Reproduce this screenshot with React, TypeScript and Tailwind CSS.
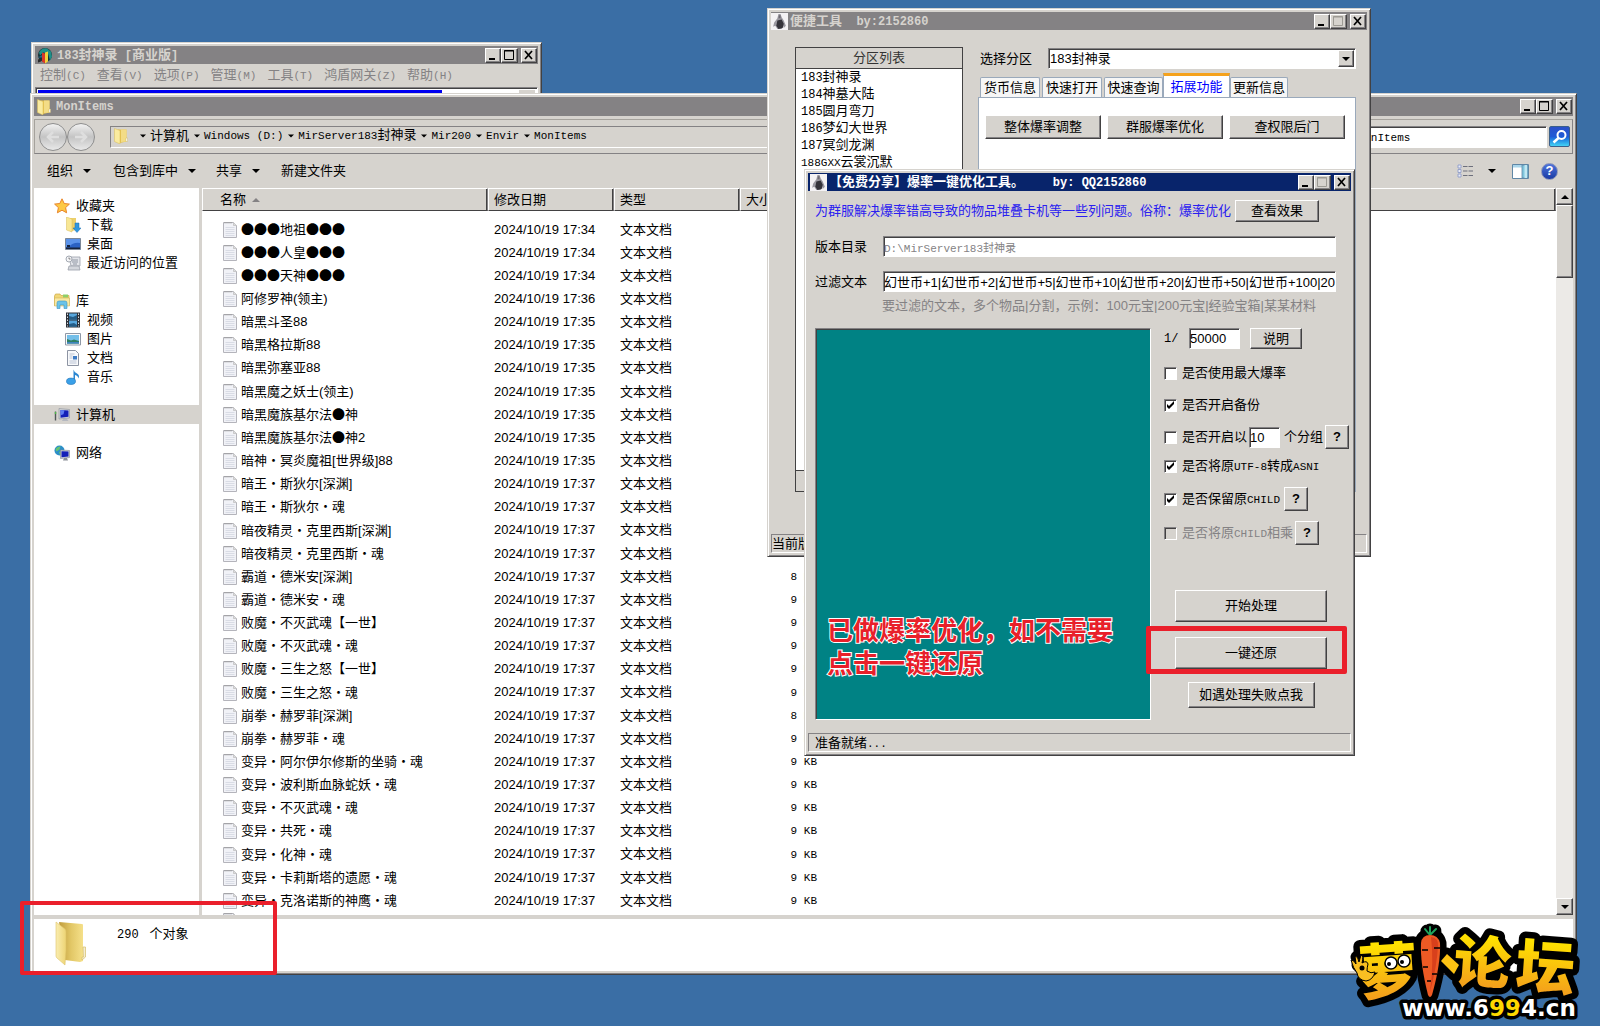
import React from "react";

const RAISED =
  "bg-[#d6d3ce] border border-t-white border-l-white border-r-[#424142] border-b-[#424142] shadow-[inset_-1px_-1px_0_#848284]";
const SUNKEN =
  "border border-t-[#848284] border-l-[#848284] border-r-white border-b-white shadow-[inset_1px_1px_0_#424142]";
const WINDOW =
  "bg-[#d6d3ce] border border-t-[#d6d3ce] border-l-[#d6d3ce] border-r-[#424142] border-b-[#424142] shadow-[inset_1px_1px_0_#fff,inset_-1px_-1px_0_#848284] p-[3px]";

function Mono({ children }: { children: React.ReactNode }) {
  return <span className="font-['Liberation_Mono',monospace] text-[11px] whitespace-pre">{children}</span>;
}

function Caption({ children }: { children: React.ReactNode }) {
  return <span className="font-['Liberation_Mono',monospace] text-[12px] whitespace-pre">{children}</span>;
}

function Down({ className = "w-2" }: { className?: string }) {
  return (
    <svg viewBox="0 0 8 4" className={`h-1 shrink-0 ${className}`} aria-hidden="true">
      <path d="M0 0h8L4 4z" fill="#000" />
    </svg>
  );
}

function WindowButtons({ dimMax = false }: { dimMax?: boolean }) {
  const max = dimMax ? "#9c9a94" : "#000";
  return (
    <div className="ml-auto flex shrink-0 items-center pr-px">
      <button aria-label="最小化" className={`${RAISED} h-[15px] w-4`}>
        <svg viewBox="0 0 14 13" className="h-[13px] w-3.5">
          <path d="M3 9h6v2H3z" />
        </svg>
      </button>
      <button aria-label="最大化" className={`${RAISED} h-[15px] w-[17px]`}>
        <svg viewBox="0 0 15 13" className="h-[13px] w-[15px]">
          <path d="M2.5 1.5h9v9h-9zM2 2h10" fill="none" stroke={max} />
        </svg>
      </button>
      <button aria-label="关闭" className={`${RAISED} ml-[3px] h-[15px] w-4`}>
        <svg viewBox="0 0 14 13" className="h-[13px] w-3.5">
          <path d="M3 2l7 8M10 2l-7 8" fill="none" stroke="#000" strokeWidth="1.7" />
        </svg>
      </button>
    </div>
  );
}

function FolderIcon({ className = "h-4 w-4" }: { className?: string }) {
  return (
    <svg viewBox="0 0 16 16" className={`shrink-0 ${className}`} aria-hidden="true">
      <path d="M5 1.5h8.500v12L7 15z" fill="#e6c452" />
      <path d="M8 1.5h5.500v12L8 14z" fill="#f3dc86" />
      <path d="M1.500.5L7 2.500V16l-5.500-2.500z" fill="#faeb9f" stroke="#d9bb55" strokeWidth=".5" />
      <path d="M13 10h1.500v3.500H13z" fill="#fff" stroke="#c8ad50" strokeWidth=".4" />
    </svg>
  );
}

function BigFolder() {
  return (
    <svg viewBox="0 0 32 45" className="h-[45px] w-8 shrink-0" aria-hidden="true">
      <defs>
        <linearGradient id="bf1" x1="0" x2="1">
          <stop offset="0" stopColor="#c09c3c" />
          <stop offset=".5" stopColor="#e2c766" />
          <stop offset="1" stopColor="#f5e08a" />
        </linearGradient>
        <linearGradient id="bf2" x1="0" x2="1">
          <stop offset="0" stopColor="#faedb0" />
          <stop offset="1" stopColor="#edd474" />
        </linearGradient>
      </defs>
      <path d="M4 1l23 2q1 0 1 1v36l-3 1-15-2z" fill="url(#bf1)" />
      <path d="M28 26h2.500v10L27 39v-3h1.500z" fill="#f4edd0" stroke="#d6bd68" strokeWidth=".7" />
      <path d="M1 1l9 7q1 1 1 3v18l-1 15-8-7q-1-1-1-2z" fill="url(#bf2)" stroke="#ddc36a" strokeWidth=".6" />
    </svg>
  );
}

function FileIcon() {
  return (
    <svg viewBox="0 0 14 17" className="h-[17px] w-3.5 shrink-0" aria-hidden="true">
      <path d="M.5 1.500H10.500l3 3v12H.5z" fill="#f1f2f7" stroke="#b4b4bb" />
      <path d="M10.500 1.500v3h3" fill="#ddd" stroke="#bbb" strokeWidth=".7" />
      <path d="M2 1v1.500M4 1v1.500M6 1v1.500M8 1v1.500" stroke="#888" strokeWidth=".7" />
      <path d="M2.500 6.500h9M2.500 8.500h9M2.500 10.500h9M2.500 12.500h9M2.500 14.500h9" stroke="#d3d6e0" strokeWidth=".8" />
    </svg>
  );
}

function AppIcon() {
  return (
    <svg viewBox="0 0 16 16" className="h-[17px] w-[17px] shrink-0" aria-hidden="true">
      <path d="M0 0h16v16H0z" fill="#f4f2f4" />
      <path d="M7 1l2 0 1 3 2 3 2 5-2 2-1-4-1 5H6l-2-3-2 1 1-4 3-4z" fill="#9a98a0" />
      <path d="M6 7l4-1 2 4-1 4-4 1-2-3z" fill="#35333a" />
      <path d="M7.500 2h1.500v3H7z" fill="#6e6a72" />
    </svg>
  );
}

function GlobeDoorIcon() {
  return (
    <svg viewBox="0 0 16 16" className="h-[17px] w-4 shrink-0" aria-hidden="true">
      <circle cx="8" cy="7.500" r="7" fill="#16323a" />
      <path d="M2 5q3-5 8-4l4 3 1 5-2 4-2-7-5-1-3 3z" fill="#1f8f88" />
      <path d="M1 10l5-3v3z" fill="#1c6f8c" />
      <path d="M5 5l3 1v10l-3-2z" fill="#d9382a" />
      <path d="M8 5l3-1v10l-3 2z" fill="#f0d23c" />
      <path d="M1 12l3-1v3l-3 1z" fill="#2b2b2b" />
    </svg>
  );
}

type IconName =
  | "star" | "download" | "desktop" | "recent" | "library" | "video" | "picture" | "document" | "music" | "computer" | "network";

function NavIcon({ name }: { name: IconName }) {
  const art: Record<IconName, React.ReactNode> = {
    star: (
      <path d="M8 .8l2.200 4.700 5.200.6-3.800 3.500 1 5.200L8 12.200l-4.600 2.600 1-5.200L.6 6.100l5.200-.6z" fill="#fdc944" stroke="#e8842a" />
    ),
    download: (
      <>
        <path d="M5 1h6v12l-4 1z" fill="#ecd06a" />
        <path d="M1.500 0L7 2v13l-5.500-2z" fill="#f8e795" stroke="#d9bb55" strokeWidth=".5" />
        <path d="M10 6h4v5h2l-4 4.500L8 11h2z" fill="#2f97e0" stroke="#1a6cb0" strokeWidth=".5" />
      </>
    ),
    desktop: (
      <>
        <path d="M.5 2.500h15v11H.5z" fill="#2b62c4" stroke="#7b8798" />
        <path d="M1 3h14v4Q8 6 4 11H1z" fill="#5b93ea" />
        <path d="M1 11.500h14V13H1z" fill="#16233c" />
        <path d="M2 9h3v2H2z" fill="#16233c" />
      </>
    ),
    recent: (
      <>
        <path d="M4 2h11v9H6z" fill="#e3e5ea" stroke="#9aa0aa" strokeWidth=".8" />
        <path d="M7 5h6M7 7h6M8 9h4" stroke="#8f96a3" />
        <path d="M4 11h10l1 4H3z" fill="#d4d7dd" stroke="#9aa0aa" strokeWidth=".8" />
        <circle cx="4" cy="4" r="3" fill="#f5f6f8" stroke="#a5aab3" />
        <path d="M4 2.500V4h1.500" stroke="#666" fill="none" strokeWidth=".8" />
      </>
    ),
    library: (
      <>
        <path d="M.5 3l1-2H6l1 1.500h8v10H.5z" fill="#f1d778" stroke="#cda945" strokeWidth=".7" />
        <path d="M9 1.500h5v3H9z" fill="#8fcf6a" />
        <path d="M.5 5h15v8H.5z" fill="#f9e9a4" stroke="#cda945" strokeWidth=".5" />
        <path d="M3 15.500V10q0-2 2-2h6q2 0 2 2v5.500h-3V12H6v3.500z" fill="#6cc3e8" stroke="#3d94c4" strokeWidth=".6" />
      </>
    ),
    video: (
      <>
        <path d="M1 .5h14v15H1z" fill="#2d3138" />
        <path d="M4 1.500h8v6H4zM4 8.500h8v6H4z" fill="#57a6dc" />
        <path d="M4 4l4 1 4-2v4.500H4zM4 12l5-1 3 2v1.500H4z" fill="#245c86" />
        <path d="M2.500 1.500v13M13.500 1.500v13" stroke="#d8dce2" strokeDasharray="1.500 1.500" />
      </>
    ),
    picture: (
      <>
        <path d="M.5 2.500h15v11.500H.5z" fill="#fafafa" stroke="#8f98a6" />
        <path d="M2 4h12v8.500H2z" fill="#74bfe9" />
        <path d="M2 8l4 1.500 3-1 5 1.500v2.500H2z" fill="#2f7f63" />
        <path d="M2 11h12v1.500H2z" fill="#3f83c0" />
      </>
    ),
    document: (
      <>
        <path d="M2.500.5h8l3 3v12h-11z" fill="#f8f9fb" stroke="#8d94a3" />
        <path d="M4.500 4h5M4.500 6h3M4.500 8h3M4.500 11h7M4.500 13h7" stroke="#a9b6cc" strokeWidth=".8" />
        <path d="M8 6h4v3.500H8z" fill="#3f7cc4" />
      </>
    ),
    music: (
      <>
        <path d="M8.500.5Q9 3 12 4.500t1.500 5Q13 6.500 10 6v6.500H8.500z" fill="#2a86d2" />
        <ellipse cx="6" cy="12.300" rx="4.500" ry="3.200" fill="#3aa0e8" stroke="#1f71b5" strokeWidth=".6" />
      </>
    ),
    computer: (
      <>
        <path d="M5 1.500l10.500 1V11L5 12z" fill="#cfd3da" stroke="#8b9099" strokeWidth=".6" />
        <path d="M6.500 3l8 .6v6.200l-8 .9z" fill="#1420b8" />
        <path d="M6.500 3l4 .3-1 4-3 1z" fill="#5d7df0" />
        <path d="M9 12h4l1.500 2H8z" fill="#b5b8c0" />
        <path d="M.8 4.500h1.400v9H.8z" fill="#50585a" />
        <path d="M.8 5h1.400v2H.8z" fill="#4db848" />
      </>
    ),
    network: (
      <>
        <circle cx="5.500" cy="5.500" r="5" fill="#2c8fc9" />
        <path d="M1.500 4q2-3 5-2.500l-1 3-3 2zM5 7l3-1v4H6z" fill="#66c470" />
        <path d="M6.500 5l9 .5v7l-9 1z" fill="#cdd1d8" stroke="#7f8590" strokeWidth=".6" />
        <path d="M7.500 6.200l7 .4v5l-7 .7z" fill="#1420b8" />
        <path d="M10 13h3l1 2.500H9z" fill="#8b8f98" />
      </>
    ),
  };
  return (
    <svg viewBox="0 0 16 16" className="h-4 w-4 shrink-0" aria-hidden="true">
      {art[name]}
    </svg>
  );
}

const NAV: { head: [IconName, string]; items: [IconName, string][]; active?: boolean }[] = [
  { head: ["star", "收藏夹"], items: [["download", "下载"], ["desktop", "桌面"], ["recent", "最近访问的位置"]] },
  { head: ["library", "库"], items: [["video", "视频"], ["picture", "图片"], ["document", "文档"], ["music", "音乐"]] },
  { head: ["computer", "计算机"], items: [], active: true },
  { head: ["network", "网络"], items: [] },
];

const FILES: [string, string, number][] = [
  ["●●●地祖●●●", "17:34", 9],
  ["●●●人皇●●●", "17:34", 9],
  ["●●●天神●●●", "17:34", 9],
  ["阿修罗神(领主)", "17:36", 9],
  ["暗黑斗圣88", "17:35", 9],
  ["暗黑格拉斯88", "17:35", 9],
  ["暗黑弥塞亚88", "17:35", 9],
  ["暗黑魔之妖士(领主)", "17:35", 9],
  ["暗黑魔族基尔法●神", "17:35", 9],
  ["暗黑魔族基尔法●神2", "17:35", 9],
  ["暗神·冥炎魔祖[世界级]88", "17:35", 9],
  ["暗王·斯狄尔[深渊]", "17:37", 8],
  ["暗王·斯狄尔·魂", "17:37", 9],
  ["暗夜精灵·克里西斯[深渊]", "17:37", 8],
  ["暗夜精灵·克里西斯·魂", "17:37", 9],
  ["霸道·德米安[深渊]", "17:37", 8],
  ["霸道·德米安·魂", "17:37", 9],
  ["败魔·不灭武魂【一世】", "17:37", 9],
  ["败魔·不灭武魂·魂", "17:37", 9],
  ["败魔·三生之怒【一世】", "17:37", 9],
  ["败魔·三生之怒·魂", "17:37", 9],
  ["崩拳·赫罗菲[深渊]", "17:37", 8],
  ["崩拳·赫罗菲·魂", "17:37", 9],
  ["变异·阿尔伊尔修斯的坐骑·魂", "17:37", 9],
  ["变异·波利斯血脉蛇妖·魂", "17:37", 9],
  ["变异·不灭武魂·魂", "17:37", 9],
  ["变异·共死·魂", "17:37", 9],
  ["变异·化神·魂", "17:37", 9],
  ["变异·卡莉斯塔的遗愿·魂", "17:37", 9],
  ["变异·克洛诺斯的神鹰·魂", "17:37", 9],
];

function FileName({ name }: { name: string }) {
  return (
    <span>
      {name.split(/([·●])/).map((part, i) =>
        part === "·" || part === "●" ? (
          <span key={i} className="inline-block w-[13px] text-center font-['Noto_Sans_CJK_SC',sans-serif]">
            {part}
          </span>
        ) : (
          part
        ),
      )}
    </span>
  );
}

function ControlWindow() {
  const menus = [["控制", "C"], ["查看", "V"], ["选项", "P"], ["管理", "M"], ["工具", "T"], ["鸿盾网关", "Z"], ["帮助", "H"]];
  return (
    <section className={`absolute top-[42px] left-[31px] w-[511px] ${WINDOW}`}>
      <header className="flex h-[18px] items-center gap-1 bg-[#848284] pl-0.5 font-bold text-[#d6d3ce]">
        <GlobeDoorIcon />
        <h2>
          <Caption>183</Caption>封神录<Caption> [</Caption>商业版<Caption>]</Caption>
        </h2>
        <WindowButtons />
      </header>
      <nav className="flex h-[23px] items-center gap-[11px] pl-[5px] text-[#848284]">
        {menus.map(([label, key]) => (
          <button key={key}>
            {label}
            <Mono>({key})</Mono>
          </button>
        ))}
      </nav>
      <div className={`flex h-10 bg-white p-0.5 ${SUNKEN}`}>
        <div className="w-[404px] bg-[#0000f0]" />
        <div className="ml-auto w-4 bg-[#d6d3ce]" />
      </div>
    </section>
  );
}

function NavButton({ dir }: { dir: "left" | "right" }) {
  return (
    <button
      aria-label={dir === "left" ? "后退" : "前进"}
      className="flex size-7 items-center justify-center rounded-full border border-[#8e8e8e] bg-linear-to-b from-[#f2f2f2] via-[#c4c4c4] to-[#e9e9e9]"
    >
      <svg viewBox="0 0 16 16" className="size-4" aria-hidden="true">
        <path
          d={dir === "left" ? "M14 8H3M8 3L3 8l5 5" : "M2 8h11M8 3l5 5-5 5"}
          fill="none"
          stroke="#dedede"
          strokeWidth="2.500"
        />
      </svg>
    </button>
  );
}

function Explorer() {
  const crumbs: React.ReactNode[] = [
    "计算机",
    <Mono>Windows (D:)</Mono>,
    <><Mono>MirServer183</Mono>封神录</>,
    <Mono>Mir200</Mono>,
    <Mono>Envir</Mono>,
    <Mono>MonItems</Mono>,
  ];
  const th = "border border-t-white border-l-white border-r-[#848284] border-b-[#424142] p-0 text-left font-normal shadow-[inset_-1px_0_0_#424142]";
  return (
    <section className={`absolute top-[93px] right-[23px] bottom-[51px] left-[30px] flex flex-col ${WINDOW}`}>
      <header className="flex h-[19px] shrink-0 items-center gap-1 bg-[#848284] pl-0.5 font-bold text-[#d6d3ce]">
        <FolderIcon />
        <h2>
          <Caption>MonItems</Caption>
        </h2>
        <WindowButtons />
      </header>
      <div className="mt-[3px] flex h-[35px] shrink-0 items-center border border-t-[#a5a29c] border-r-[#848284] border-b-[#848284] border-l-[#a5a29c] pr-0.5 pl-1">
        <NavButton dir="left" />
        <NavButton dir="right" />
        <div className="ml-[15px] flex h-[22px] flex-1 items-center border border-t-[#848284] border-r-white border-b-white border-l-[#848284] pb-0.5 pl-0.5">
          <FolderIcon />
          <ol className="ml-1.5 flex">
            {crumbs.map((crumb, i) => (
              <li key={i} className="flex items-center">
                <span className="flex w-[15px] justify-center">
                  <Down className="w-1.5" />
                </span>
                <a href="#">{crumb}</a>
              </li>
            ))}
          </ol>
        </div>
        <input
          aria-label="搜索"
          defaultValue="搜索 MonItems"
          className={`ml-2 h-[22px] w-[234px] bg-white pb-0.5 pl-[15px] font-['Liberation_Mono','Noto_Sans_CJK_SC',monospace] text-[11px] ${SUNKEN}`}
        />
        <button aria-label="搜索" className="ml-0.5 flex size-[21px] items-center justify-center rounded-xs border border-[#3b5f8a] bg-linear-to-b from-[#2b50c8] via-[#1f5ad6] to-[#45d2f4]">
          <svg viewBox="0 0 16 16" className="size-4" aria-hidden="true">
            <circle cx="9.500" cy="6" r="4" fill="none" stroke="#fff" strokeWidth="2" />
            <path d="M6.500 9L1.500 13.500" stroke="#fff" strokeWidth="2.500" />
          </svg>
        </button>
      </div>
      <div className="flex h-[34px] shrink-0 items-center pr-[15px] pl-[13px]">
        <button className="flex items-center gap-2.5">组织<Down /></button>
        <button className="ml-[22px] flex items-center gap-2.5">包含到库中<Down /></button>
        <button className="ml-5 flex items-center gap-2.5">共享<Down /></button>
        <button className="ml-[21px]">新建文件夹</button>
        <button aria-label="更改视图" className="ml-auto flex items-center gap-3.5">
          <svg viewBox="0 0 17 14" className="h-3.5 w-[17px]" aria-hidden="true">
            <path d="M1 1h3v3H1zM1 5.500h3v3H1zM1 10h3v3H1z" fill="#e9ecf8" stroke="#8f9cc8" strokeWidth=".9" />
            <path d="M6 2.500h11M6 7h11M6 11.500h11" stroke="#6d6f7c" strokeDasharray="4.500 1" />
          </svg>
          <Down />
        </button>
        <button aria-label="预览窗格" className="ml-4">
          <svg viewBox="0 0 17 15" className="h-[15px] w-[17px]" aria-hidden="true">
            <path d="M.5.5h16v14H.5z" fill="#fff" stroke="#5f87a6" />
            <path d="M1 1h9v2.500H1z" fill="#a9d5ea" />
            <path d="M10 1h6v13h-6z" fill="#7fc6dd" stroke="#5f87a6" strokeWidth=".8" />
            <path d="M12.500 1H15v13h-2.500z" fill="#c1e8f3" />
          </svg>
        </button>
        <button aria-label="帮助" className="ml-3 flex size-[17px] items-center justify-center rounded-full border border-[#8c95b8] bg-linear-to-b from-[#4f74dc] to-[#1a3aa4] text-[13px] font-bold text-white">
          ?
        </button>
      </div>
      <div className="flex min-h-0 flex-1">
        <nav className="flex w-[165px] shrink-0 flex-col gap-[19px] overflow-hidden bg-white pt-2">
          {NAV.map((group) => (
            <ul key={group.head[1]}>
              <li>
                <a href="#" className={`flex h-[19px] items-center gap-1.5 pl-5 ${group.active ? "bg-[#d6d3ce]" : ""}`}>
                  <NavIcon name={group.head[0]} />
                  {group.head[1]}
                </a>
              </li>
              {group.items.map(([icon, label]) => (
                <li key={label}>
                  <a href="#" className="flex h-[19px] items-center gap-1.5 pl-[31px]">
                    <NavIcon name={icon} />
                    {label}
                  </a>
                </li>
              ))}
            </ul>
          ))}
        </nav>
        <div className="ml-[3px] min-w-0 flex-1 overflow-hidden bg-white">
          <table className="w-full table-fixed border-separate border-spacing-0">
            <colgroup>
              <col className="w-[286px]" />
              <col className="w-[126px]" />
              <col className="w-[126px]" />
              <col />
            </colgroup>
            <thead>
              <tr className="h-[23px] bg-[#d6d3ce]">
                <th className={th}>
                  <span className="flex items-center gap-1.5 pl-[17px]">
                    名称
                    <svg viewBox="0 0 8 4" className="h-1 w-2" aria-hidden="true">
                      <path d="M4 0l4 4H0z" fill="#848284" />
                    </svg>
                  </span>
                </th>
                <th className={`${th} pl-[5px]`}>修改日期</th>
                <th className={`${th} pl-[5px]`}>类型</th>
                <th className={`${th} pl-[5px]`}>大小</th>
              </tr>
            </thead>
            <tbody className="before:block before:h-[7px]">
              {FILES.map(([name, time, size]) => (
                <tr key={name} className="h-[23px] nth-[7n]:h-6">
                  <td className="p-0">
                    <span className="flex items-center gap-1 pl-[21px] whitespace-nowrap">
                      <FileIcon />
                      <FileName name={name} />
                    </span>
                  </td>
                  <td className="p-0 pl-1.5">2024/10/19 {time}</td>
                  <td className="p-0 pl-1.5">文本文档</td>
                  <td className="p-0">
                    <span className="block w-[77px] text-right">
                      <Mono>{size} KB</Mono>
                    </span>
                  </td>
                </tr>
              ))}
              <tr>
                <td className="p-0 pl-[21px]">
                  <FileIcon />
                </td>
              </tr>
            </tbody>
          </table>
        </div>
        <div className="flex w-[17px] shrink-0 flex-col bg-[#eceae7]">
          <button aria-label="向上滚动" className={`flex h-[17px] items-center justify-center ${RAISED}`}>
            <Down className="w-2 rotate-180" />
          </button>
          <div className={`h-[73px] ${RAISED}`} />
          <button aria-label="向下滚动" className={`mt-auto flex h-[17px] items-center justify-center ${RAISED}`}>
            <Down />
          </button>
        </div>
      </div>
      <footer className="mt-1 flex h-[52px] shrink-0 gap-[30px] bg-white pt-0.5 pl-[21px]">
        <BigFolder />
        <p className="pt-[5px]">
          <Caption>290 </Caption> 个对象
        </p>
      </footer>
    </section>
  );
}

function PushButton({ children, className }: { children: React.ReactNode; className: string }) {
  return <button className={`flex items-center justify-center whitespace-nowrap ${RAISED} ${className}`}>{children}</button>;
}

function ToolWindow() {
  const zones = ["封神录", "神墓大陆", "圆月弯刀", "梦幻大世界", "冥剑龙渊"];
  const tab = "flex h-5 items-center justify-center rounded-t-xs border border-b-0 border-[#9aa9bb] bg-[#f6f6f6]";
  return (
    <section className={`absolute top-2 left-[767px] w-[604px] ${WINDOW}`}>
      <header className="flex h-[18px] items-center gap-0.5 bg-[#848284] font-bold text-[#d6d3ce]">
        <AppIcon />
        <h2>
          便捷工具<Caption>{"  by:2152860"}</Caption>
        </h2>
        <WindowButtons dimMax />
      </header>
      <div className="flex gap-[15px] pt-[17px] pr-[11px] pl-6">
        <div className="flex h-[445px] w-[168px] shrink-0 flex-col border border-[#424142]">
          <h3 className="h-[21px] border-b border-[#424142] text-center leading-5 text-[#333]">分区列表</h3>
          <ul className="flex-1 border-b border-[#424142] bg-white pl-[5px]">
            {zones.map((zone, i) => (
              <li key={zone} className="h-[17px]">
                <Caption>{183 + i}</Caption>
                {zone}
              </li>
            ))}
            <li className="h-[17px]">
              <Mono>188GXX</Mono>云裳沉默
            </li>
          </ul>
          <div className="h-5" />
        </div>
        <div className="flex flex-1 flex-col">
          <div className="mt-px flex h-[21px] items-center">
            <label htmlFor="zone" className="w-[70px] pl-0.5">
              选择分区
            </label>
            <div className={`flex h-[21px] flex-1 bg-white p-px ${SUNKEN}`}>
              <select id="zone" className="min-w-0 flex-1 appearance-none outline-none">
                <option>183封神录</option>
              </select>
              <span className={`pointer-events-none flex w-4 items-center justify-center ${RAISED}`}>
                <Down />
              </span>
            </div>
          </div>
          <div role="tablist" className="mt-1 flex h-6 items-end pl-0.5 whitespace-nowrap">
            <button role="tab" className={`${tab} mr-0.5 w-[60px]`}>货币信息</button>
            <button role="tab" className={`${tab} mr-0.5 w-[60px]`}>快速打开</button>
            <button role="tab" className={`${tab} w-[59px]`}>快速查询</button>
            <button role="tab" aria-selected="true" className="flex h-6 w-[67px] items-center justify-center border-x border-t-3 border-x-[#9aa9bb] border-t-[#f5a21c] bg-white text-[#0000ff]">
              拓展功能
            </button>
            <button role="tab" className={`${tab} w-[58px]`}>更新信息</button>
          </div>
          <div role="tabpanel" className="flex flex-1 items-start gap-1.5 border border-[#9aa9bb] bg-white pt-[17px] pl-1.5">
            <PushButton className="h-6 w-[116px]">整体爆率调整</PushButton>
            <PushButton className="h-6 w-[116px]">群服爆率优化</PushButton>
            <PushButton className="h-6 w-[116px]">查权限后门</PushButton>
          </div>
        </div>
      </div>
      <footer className="mt-[42px] h-[19px] border border-t-[#848284] border-r-white border-b-white border-l-[#848284] leading-[18px]">
        当前版
      </footer>
    </section>
  );
}

function Check({ label, checked = false, disabled = false }: { label: React.ReactNode; checked?: boolean; disabled?: boolean }) {
  return (
    <label className={`flex items-center gap-[5px] whitespace-nowrap ${disabled ? "text-[#848284]" : ""}`}>
      <span className="grid size-[13px] shrink-0">
        <input
          type="checkbox"
          defaultChecked={checked}
          disabled={disabled}
          className={`peer col-start-1 row-start-1 size-[13px] appearance-none bg-white disabled:bg-[#d6d3ce] ${SUNKEN}`}
        />
        <svg viewBox="0 0 13 13" className="pointer-events-none col-start-1 row-start-1 hidden size-[13px] peer-checked:block" aria-hidden="true">
          <path d="M3 5v3l2 2 5-5V2L5 7z" />
        </svg>
      </span>
      <span>{label}</span>
    </label>
  );
}

function OptimizeWindow() {
  const help = "h-6 w-6 font-bold";
  return (
    <section className={`absolute top-[169px] left-[804px] w-[551px] ${WINDOW}`}>
      <header className="flex h-[18px] items-center gap-0.5 bg-[#08246b] pl-0.5 font-bold text-white">
        <AppIcon />
        <h2>
          【免费分享】爆率一键优化工具。<Caption>{"    by: QQ2152860"}</Caption>
        </h2>
        <WindowButtons dimMax />
      </header>
      <div className="pt-[9px] pl-[7px]">
        <div className="flex h-[22px] items-center gap-1 whitespace-nowrap">
          <p className="text-[#2a20f0]">为群服解决爆率错高导致的物品堆叠卡机等一些列问题。俗称：爆率优化</p>
          <PushButton className="h-[22px] w-[84px]">查看效果</PushButton>
        </div>
        <div className="mt-3.5 flex items-center">
          <label htmlFor="dir" className="w-[68px]">版本目录</label>
          <input
            id="dir"
            disabled
            defaultValue="D:\MirServer183封神录"
            className={`mr-[15px] h-[21px] min-w-0 flex-1 bg-white font-['Liberation_Mono','Noto_Sans_CJK_SC',monospace] text-[11px] text-[#848284] ${SUNKEN}`}
          />
        </div>
        <div className="mt-3.5 flex items-center">
          <label htmlFor="filter" className="w-[68px]">过滤文本</label>
          <input
            id="filter"
            defaultValue="幻世币+1|幻世币+2|幻世币+5|幻世币+10|幻世币+20|幻世币+50|幻世币+100|20元"
            className={`mr-[15px] h-[21px] min-w-0 flex-1 bg-white ${SUNKEN}`}
          />
        </div>
        <p className="mt-1.5 h-4 pl-[67px] whitespace-nowrap text-[#848284]">
          要过滤的文本，多个物品|分割，示例：100元宝|200元宝|经验宝箱|某某材料
        </p>
        <div className="mt-3.5 flex">
          <div className={`flex h-[392px] w-[336px] shrink-0 items-end bg-[#008284] pb-[38px] pl-[11px] ${SUNKEN}`}>
            <p className="text-[26px] leading-[33px] font-bold whitespace-nowrap text-[#e8202a] [paint-order:stroke_fill] [-webkit-text-stroke:2px_#fff]">
              已做爆率优化，如不需要
              <br />
              点击一键还原
            </p>
          </div>
          <div className="flex-1">
            <div className="pl-[13px]">
              <div className="flex h-[21px] items-center">
                <label htmlFor="rate" className="w-[25px]"><Caption>1/</Caption></label>
                <input id="rate" defaultValue="50000" className={`h-[21px] w-[51px] bg-white ${SUNKEN}`} />
                <PushButton className="ml-2.5 h-[21px] w-[52px]">说明</PushButton>
              </div>
              <div className="mt-3 flex h-6 items-center">
                <Check label="是否使用最大爆率" />
              </div>
              <div className="mt-2 flex h-6 items-center">
                <Check label="是否开启备份" checked />
              </div>
              <div className="mt-2 flex h-6 items-center">
                <Check label="是否开启以" />
                <input aria-label="分组数" defaultValue="10" className={`ml-0.5 h-[21px] w-[31px] bg-white ${SUNKEN}`} />
                <span className="ml-1 whitespace-nowrap">个分组</span>
                <PushButton className={`ml-0.5 ${help}`}>?</PushButton>
              </div>
              <div className="mt-[5px] flex h-6 items-center">
                <Check label={<>是否将原<Mono>UTF-8</Mono>转成<Mono>ASNI</Mono></>} checked />
              </div>
              <div className="mt-[9px] flex h-6 items-center">
                <Check label={<>是否保留原<Mono>CHILD</Mono></>} checked />
                <PushButton className={`ml-1 ${help}`}>?</PushButton>
              </div>
              <div className="mt-2.5 flex h-6 items-center">
                <Check label={<>是否将原<Mono>CHILD</Mono>相乘</>} disabled />
                <PushButton className={`ml-0.5 ${help}`}>?</PushButton>
              </div>
            </div>
            <div className="mt-[45px] flex flex-col items-center">
              <PushButton className="h-8 w-[152px]">开始处理</PushButton>
              <div className="relative mt-[15px]">
                <PushButton className="h-8 w-[152px]">一键还原</PushButton>
                <div className="pointer-events-none absolute -top-[11px] -right-5 -bottom-[5px] -left-[29px] rounded-xs border-[5px] border-[#ea1f2b]" />
              </div>
              <PushButton className="mt-[13px] h-[26px] w-[127px]">如遇处理失败点我</PushButton>
            </div>
          </div>
        </div>
      </div>
      <footer className="mt-[13px] h-[19px] border border-t-[#848284] border-r-white border-b-white border-l-[#848284] pl-1.5 leading-[18px]">
        准备就绪<Mono>...</Mono>
      </footer>
    </section>
  );
}

function Logo() {
  const glyph = "font-['Noto_Sans_CJK_SC',sans-serif] font-black";
  const words = (
    <>
      <text x="8" y="72" fontSize="60" className={glyph} transform="rotate(-4 38 44)">萝</text>
      <text x="104" y="62" fontSize="57" className={glyph} transform="rotate(4 130 40)">论</text>
      <text x="166" y="68" fontSize="59" className={glyph} transform="rotate(4 195 44)">坛</text>
    </>
  );
  const carrot = "M71 22q1-8 9-8t10 8q1 20-8 52-2 4-4 0-8-32-7-52z";
  const dot = "M97 33l12 11-5 9-13-13z";
  return (
    <svg viewBox="0 0 236 102" className="absolute right-[14px] bottom-[3px] h-[102px] w-[236px] overflow-visible" role="img" aria-label="萝卜论坛 www.6994.cn">
      <defs>
        <linearGradient id="gold" x1="0" y1="0" x2="0" y2="1">
          <stop offset=".25" stopColor="#ffe100" />
          <stop offset=".9" stopColor="#f39a1e" />
        </linearGradient>
      </defs>
      <g stroke="#000" strokeWidth="13" strokeLinejoin="round" strokeLinecap="round" aria-hidden="true">
        {words}
        <path d={carrot} />
        <path d="M80 13l-3-3M80 13V9M81 13l4-3" />
        <path d={dot} />
        <path d="M10 38l-3-2M8 44l12 10" />
      </g>
      <g fill="url(#gold)" strokeLinejoin="round">
        {words}
      </g>
      <path d={dot} fill="#fdc313" />
      <path d="M1 39q3 0 5 4l-1-8q3 0 4 6l2-7q3 1 1 8 5-3 6 1-1 4-1 7 4 3 8 1-2 8-9 9-8-1-9-8-4-5-6-13z" fill="#f9bf22" stroke="#000" strokeWidth="1" />
      <circle cx="12" cy="47" r="2.500" />
      <path d={carrot} fill="#ee5a24" />
      <path d="M81 16q8 1 7 9-1 20-8 46 4-30 1-55z" fill="#d8401c" />
      <path d="M72 29h6M84 27h6M73 46h5M82 53h5M77 60h4" stroke="#000" strokeWidth="1.300" />
      <path d="M79 13l-4-5M80 13V6M81 13l5-5" stroke="#20a35c" strokeWidth="2" strokeLinecap="round" />
      <g stroke="#000" strokeWidth="1.500">
        <circle cx="41" cy="42" r="6" fill="#fff" />
        <circle cx="54" cy="40" r="6" fill="#fff" />
      </g>
      <circle cx="39" cy="43" r="2" />
      <circle cx="52" cy="41" r="2" />
      <text
        x="52"
        y="95"
        fontSize="23"
        fill="#fff"
        stroke="#000"
        strokeWidth="7"
        strokeLinejoin="round"
        className="font-['DejaVu_Sans',sans-serif] font-bold [paint-order:stroke_fill]"
      >
        www.6<tspan fill="#ffd800">99</tspan>4.cn
      </text>
    </svg>
  );
}

export default function App() {
  return (
    <main className="relative h-screen overflow-hidden bg-[#3a6ea5] font-['Liberation_Sans','Noto_Sans_CJK_SC',sans-serif] text-[13px] leading-4 text-black">
      <ControlWindow />
      <Explorer />
      <ToolWindow />
      <OptimizeWindow />
      <div className="pointer-events-none absolute bottom-[51px] left-5 h-[74px] w-[257px] rounded-xs border-4 border-[#ea1f2b]" />
      <Logo />
    </main>
  );
}
